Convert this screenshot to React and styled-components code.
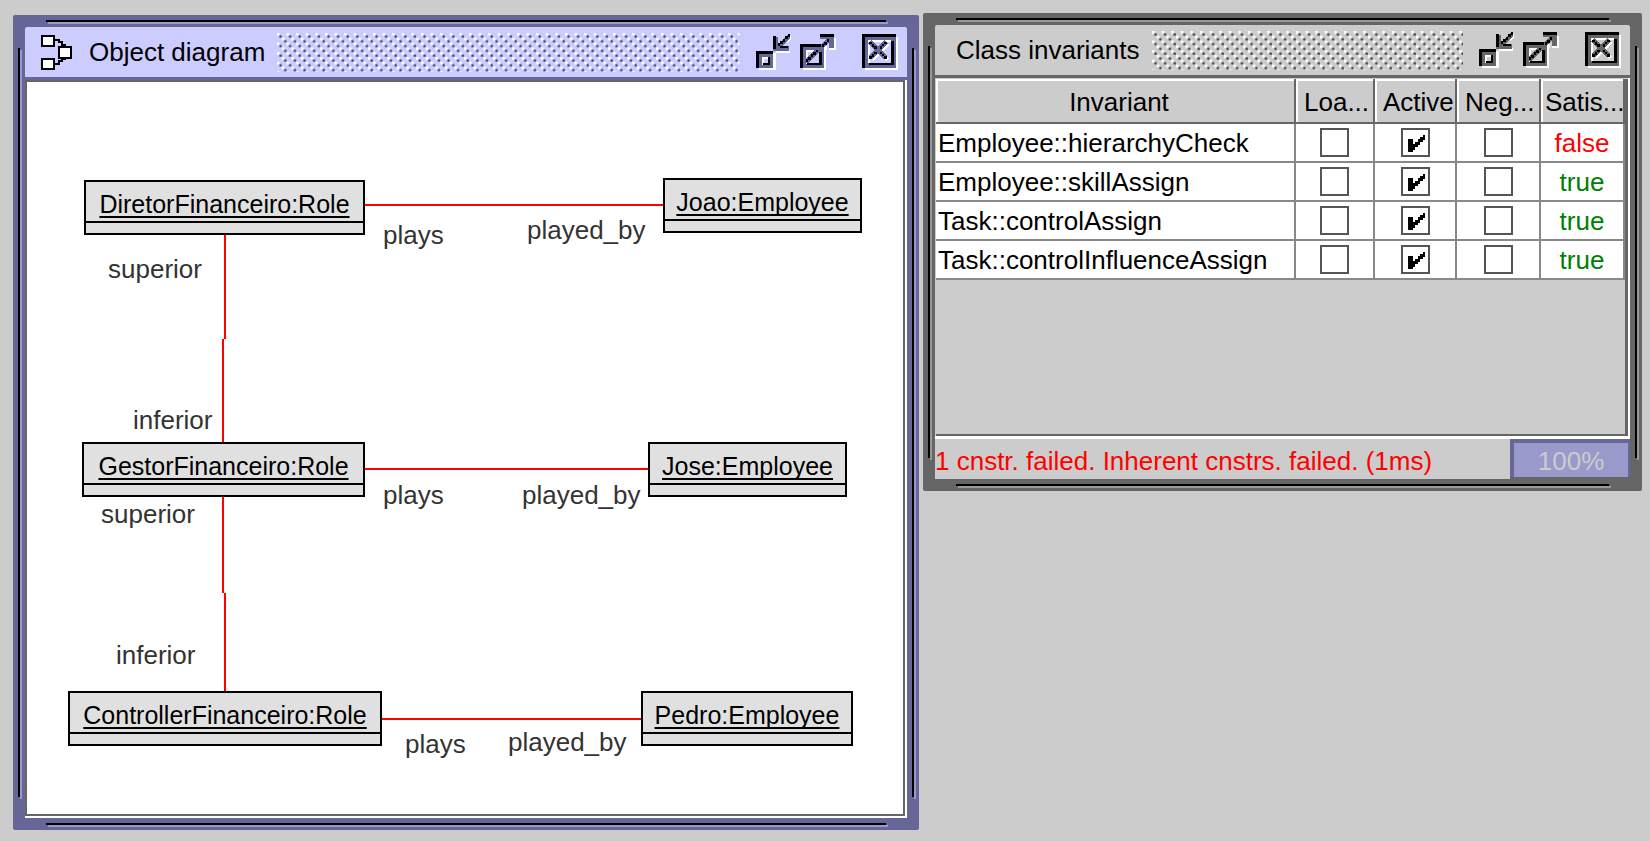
import React, { useId } from "react";
import styled, { createGlobalStyle, css } from "styled-components";

const GlobalStyle = createGlobalStyle`
  * { box-sizing: border-box; }
  body {
    margin: 0;
    background: #cccccc;
    color: #000;
    font-family: "Liberation Sans", Arial, sans-serif;
    font-size: 26px;
    line-height: 30px;
  }
`;

const active = { frame: "#666699", groove: "#9999cc", title: "#ccccff", dot: "#333366" };
const idle = { frame: "#666666", groove: "#999999", title: "#cccccc", dot: "#333333" };

const Desktop = styled.main`
  display: flex;
  gap: 4px;
  min-height: 100vh;
  padding: 13px 8px 11px 13px;
`;

const Frame = styled.section`
  position: relative;
  display: flex;
  flex-direction: column;
  flex: ${(p) => p.$grow} 1 ${(p) => p.$grow}px;
  min-width: 0;
  padding: 12px;
  border-radius: 2px;
  background: ${(p) => p.$tone.frame};
  ${(p) => (p.$compact ? css`align-self: flex-start;` : css`margin-top: 2px;`)}
`;

const Groove = styled.span`
  position: absolute;
  background: #000;
  box-shadow: 2px 2px 0 ${(p) => p.$tone.groove};
  ${(p) =>
    p.$side === "top" || p.$side === "bottom"
      ? css`left: 33px; right: 33px; height: 2px;`
      : css`top: 33px; bottom: 33px; width: 2px;`}
  ${(p) => p.$side}: 5px;
`;

const TitleBar = styled.header`
  display: flex;
  align-items: center;
  height: 53px;
  padding: 0 9px 0 ${(p) => (p.$icon ? 15 : 21)}px;
  background: ${(p) => p.$tone.title};
  border-bottom: 3px solid ${(p) => p.$tone.frame};
  border-radius: 2px 2px 0 0;
`;

const Title = styled.h1`
  margin: 0 12px 0 0;
  font-size: 26px;
  font-weight: 400;
  line-height: 30px;
  white-space: nowrap;
`;

const DiagramIcon = styled.svg`
  flex: none;
  width: 32px;
  height: 38px;
  margin-right: 17px;
`;

const BumpStrip = styled.svg`
  flex: 1;
  min-width: 0;
  height: 39px;
  margin-right: 16px;
`;

const WindowButton = styled.button`
  flex: none;
  width: 36px;
  height: 36px;
  margin: 0 0 0 ${(p) => p.$gap || 0}px;
  padding: 0;
  border: 0;
  background: none;

  svg { display: block; }
`;

const Sunken = styled.div`
  flex: 1;
  display: flex;
  border: solid #fff;
  border-width: 0 2px 2px 0;
`;

const Canvas = styled.div`
  position: relative;
  flex: 1;
  min-height: 640px;
  overflow: hidden;
  background: #fff;
  border: 2px solid #666;
`;

const Edges = styled.svg`
  position: absolute;
  inset: 0;
  width: 100%;
  height: 100%;
`;

const Node = styled.article`
  position: absolute;
  left: ${(p) => p.$x}px;
  top: ${(p) => p.$y}px;
  width: ${(p) => p.$w}px;
  height: 55px;
  border: 2px solid #000;
  background: #e0e0e0;
`;

const NodeName = styled.div`
  height: 41px;
  padding-top: 7px;
  border-bottom: 2px solid #000;
  font-size: 25px;
  text-align: center;
  text-decoration: underline;
  text-decoration-thickness: 2px;
  text-underline-offset: 3px;
  text-decoration-skip-ink: none;
  white-space: nowrap;
`;

const RoleLabel = styled.span`
  position: absolute;
  left: ${(p) => p.$x}px;
  top: ${(p) => p.$y}px;
  color: #333;
`;

const ScrollPane = styled.div`
  height: 361px;
  padding: 1px 0 0 1px;
  background: #ccc;
  border: solid #fff;
  border-width: 0 2px 3px 0;
  overflow: hidden;
`;

const Viewport = styled.div`
  height: 100%;
  border: solid #666;
  border-width: 0 3px 2px 0;
`;

const Grid = styled.table`
  width: 100%;
  table-layout: fixed;
  border-collapse: separate;
  border-spacing: 0;
`;

const Column = styled.col`
  width: ${(p) => p.$w};
`;

const Heading = styled.th`
  height: 45px;
  padding: 3px 0 0 ${(p) => p.$inset || 8}px;
  background: #ccc;
  border-right: 2px solid #666;
  border-bottom: 2px solid #666;
  box-shadow: inset 2px 2px 0 #fff;
  font-weight: 400;
  text-align: ${(p) => (p.$inset ? "left" : "center")};
  white-space: nowrap;
  overflow: hidden;
`;

const Cell = styled.td`
  height: 39px;
  padding: ${(p) => (p.$center ? "0" : "0 0 0 2px")};
  background: #fff;
  border-right: 2px solid #888;
  border-bottom: 2px solid #888;
  text-align: ${(p) => (p.$center ? "center" : "left")};
  color: ${(p) => p.$color || "#000"};
  white-space: nowrap;
  overflow: hidden;
`;

const CheckWrap = styled.label`
  position: relative;
  display: block;
  width: 29px;
  height: 29px;
  margin: 0 auto;

  input {
    display: block;
    appearance: none;
    width: 29px;
    height: 29px;
    margin: 0;
    background: #fff;
    border: 2px solid #555;
  }
  svg {
    position: absolute;
    inset: 0;
    pointer-events: none;
  }
`;

const StatusBar = styled.footer`
  display: flex;
  height: 40px;
`;

const StatusText = styled.output`
  flex: 1;
  min-width: 0;
  padding-top: 7px;
  background: #ccc;
  color: #f00;
  white-space: nowrap;
  overflow: hidden;
`;

const Progress = styled.div`
  width: 120px;
  margin-bottom: 2px;
  border: solid #666699;
  border-width: 4px 2px 0 4px;
  background: #9999cc;
  color: #ccc;
  line-height: 36px;
  text-align: center;
`;

function Bumps({ tone }) {
  const id = useId();
  return (
    <BumpStrip aria-hidden="true">
      <defs>
        <pattern id={id} width="9.6" height="9.6" patternUnits="userSpaceOnUse">
          <path fill="#fff" d="M0 0h2.6v2.6H0zM4.8 4.8h2.6v2.6H4.8z" />
          <path fill={tone.dot} d="M2.4 2.4h2.2v2.2H2.4zM7.2 7.2h2.2v2.2H7.2z" />
        </pattern>
      </defs>
      <rect width="100%" height="100%" fill={`url(#${id})`} />
    </BumpStrip>
  );
}

function MinimizeIcon({ tone }) {
  return (
    <svg width="36" height="36" shapeRendering="crispEdges">
      <path fill="#fff" d="M3 19h17v17H3zM20 16h14v3H20zM31 5l4-3v3l-4 4z" />
      <path fill={tone.frame} d="M0 17h17v17H0z" />
      <path fill="#000" d="M0 17h17v3H0zM0 17h3v17H0z" />
      <path fill="#fff" d="M6 23h8v8H6z" />
      <path fill={tone.title} d="M8 25h4v4H8z" />
      <path fill="#000" d="M12 23h2v8H7v-2h5z" />
      <path fill={tone.frame} d="M17 3h5v7L31 1h3v4l-8 7h7v5H17z" />
      <path fill="#000" d="M17 2h3v13h-3zM22 9h2V7h3V5h2V2h3V0h2v3h-2v2h-3v3h-2v2h-3v2h-2zM24 12h8v2h-8z" />
    </svg>
  );
}

function MaximizeIcon({ tone }) {
  return (
    <svg width="36" height="36" shapeRendering="crispEdges">
      <path fill="#fff" d="M3 12h23v24H3zM29 4h7v12h-7zM22 12h5v4h-5z" />
      <path fill={tone.frame} d="M0 10h24v24H0z" />
      <path fill="#000" d="M0 10h21v3H0zM0 10h3v24H0z" />
      <path fill="#fff" d="M6 16h14v14H6z" />
      <path fill={tone.title} d="M8 18h12v11H8z" />
      <path fill="#000" d="M19 18h3v13H7v-2h12z" />
      <path fill={tone.frame} d="M5 25l12-11 3 3L9 29H5z" />
      <path fill="#000" d="M6 25h2v-2h3v-3h2v-2h3v-2h2v2h-2v3h-3v2h-2v3H8v2H6z" />
      <path fill={tone.frame} d="M20 0h14v14h-5V8l-6 6-3-3 6-6h-6z" />
      <path fill="#000" d="M20 0h14v3H20zM22 10h2V8h3V5h2v3h-2v3h-3v2h-2z" />
    </svg>
  );
}

function CloseIcon({ tone }) {
  return (
    <svg width="36" height="36" shapeRendering="crispEdges">
      <path fill="#fff" d="M3 3h33v33H3z" />
      <path fill={tone.frame} d="M0 0h34v34H0z" />
      <path fill="#000" d="M0 0h34v3H0zM0 0h3v34H0zM29 7h3v24H7v-2h22z" />
      <path fill="#fff" d="M6 6h23v23H6z" />
      <path fill={tone.title} d="M8 8h21v21H8z" />
      <path stroke="#fff" strokeWidth="4" d="M10 10l16 16M26 10L10 26" />
      <path stroke={tone.frame} strokeWidth="5" d="M8 8l16 16M24 8L8 24" />
      <path fill="#000" d="M7 8h3v2h2v2h3v3h-3v-2h-2v-3H7zM22 8h3v2h-3v2h-2v3h-2v-3h2v-2h2zM12 18h3v2h-3v3h-2v2H7v-3h3v-2h2zM18 18h2v2h2v2h3v3h-3v-3h-2v-2h-2z" />
    </svg>
  );
}

function WindowFrame({ title, tone, grow, compact, icon, children }) {
  return (
    <Frame $tone={tone} $grow={grow} $compact={compact} aria-label={title}>
      {["top", "right", "bottom", "left"].map((side) => (
        <Groove key={side} $side={side} $tone={tone} />
      ))}
      <TitleBar $tone={tone} $icon={Boolean(icon)}>
        {icon}
        <Title>{title}</Title>
        <Bumps tone={tone} />
        <WindowButton aria-label="Minimize"><MinimizeIcon tone={tone} /></WindowButton>
        <WindowButton $gap={8} aria-label="Maximize"><MaximizeIcon tone={tone} /></WindowButton>
        <WindowButton $gap={26} aria-label="Close"><CloseIcon tone={tone} /></WindowButton>
      </TitleBar>
      {children}
    </Frame>
  );
}

const nodes = [
  { name: "DiretorFinanceiro:Role", x: 57, y: 98, w: 281 },
  { name: "Joao:Employee", x: 636, y: 96, w: 199 },
  { name: "GestorFinanceiro:Role", x: 55, y: 360, w: 283 },
  { name: "Jose:Employee", x: 621, y: 360, w: 199 },
  { name: "ControllerFinanceiro:Role", x: 41, y: 609, w: 314 },
  { name: "Pedro:Employee", x: 614, y: 609, w: 212 },
];

const labels = [
  { text: "plays", x: 356, y: 138 },
  { text: "played_by", x: 500, y: 133 },
  { text: "superior", x: 81, y: 172 },
  { text: "inferior", x: 106, y: 323 },
  { text: "plays", x: 356, y: 398 },
  { text: "played_by", x: 495, y: 398 },
  { text: "superior", x: 74, y: 417 },
  { text: "inferior", x: 89, y: 558 },
  { text: "plays", x: 378, y: 647 },
  { text: "played_by", x: 481, y: 645 },
];

const invariants = [
  { name: "Employee::hierarchyCheck", satisfied: false },
  { name: "Employee::skillAssign", satisfied: true },
  { name: "Task::controlAssign", satisfied: true },
  { name: "Task::controlInfluenceAssign", satisfied: true },
];

function CheckBox({ label, checked }) {
  return (
    <CheckWrap>
      <input type="checkbox" defaultChecked={checked} aria-label={label} />
      {checked && (
        <svg width="29" height="29" shapeRendering="crispEdges" aria-hidden="true">
          <path d="M7 11h5v5h2v-2h3v-3h2V9h3V7h2v5h-2v2h-3v3h-2v2h-3v3h-2v2H7z" />
        </svg>
      )}
    </CheckWrap>
  );
}

export default function App() {
  return (
    <>
      <GlobalStyle />
      <Desktop>
        <WindowFrame
          title="Object diagram"
          tone={active}
          grow={906}
          icon={
            <DiagramIcon viewBox="0 0 32 38" shapeRendering="crispEdges" aria-hidden="true">
              <path fill="none" stroke="#000" strokeWidth="2" d="M14 7h5v2h3v3h3v3M14 31h5v-3h3v-2h3v-3" />
              <path fill="#fff" stroke="#000" strokeWidth="2" d="M2 3h12v10H2zM19 14h12v11H19zM2 26h12v10H2z" />
            </DiagramIcon>
          }
        >
          <Sunken>
            <Canvas>
              <Edges fill="none" stroke="#ff0000" strokeWidth="2" shapeRendering="crispEdges" aria-hidden="true">
                <path d="M338 123H636M338 387H621M355 637H614" />
                <path d="M198 153V257M196 257V360M196 415V511M198 511V610" />
              </Edges>
              {nodes.map((n) => (
                <Node key={n.name} $x={n.x} $y={n.y} $w={n.w}>
                  <NodeName>{n.name}</NodeName>
                </Node>
              ))}
              {labels.map((l) => (
                <RoleLabel key={`${l.x}-${l.y}`} $x={l.x} $y={l.y}>{l.text}</RoleLabel>
              ))}
            </Canvas>
          </Sunken>
        </WindowFrame>

        <WindowFrame title="Class invariants" tone={idle} grow={719} compact>
          <ScrollPane>
            <Viewport>
              <Grid>
                <colgroup>
                  <Column />
                  <Column $w="79px" />
                  <Column $w="82px" />
                  <Column $w="84px" />
                  <Column $w="84px" />
                </colgroup>
                <thead>
                  <tr>
                    <Heading>Invariant</Heading>
                    <Heading $inset={8}>Loa...</Heading>
                    <Heading $inset={8}>Active</Heading>
                    <Heading $inset={8}>Neg...</Heading>
                    <Heading $inset={4}>Satis...</Heading>
                  </tr>
                </thead>
                <tbody>
                  {invariants.map((row) => (
                    <tr key={row.name}>
                      <Cell>{row.name}</Cell>
                      <Cell $center><CheckBox label={`${row.name} loaded`} /></Cell>
                      <Cell $center><CheckBox label={`${row.name} active`} checked /></Cell>
                      <Cell $center><CheckBox label={`${row.name} negated`} /></Cell>
                      <Cell $center $color={row.satisfied ? "#008000" : "#ff0000"}>
                        {String(row.satisfied)}
                      </Cell>
                    </tr>
                  ))}
                </tbody>
              </Grid>
            </Viewport>
          </ScrollPane>
          <StatusBar>
            <StatusText>1 cnstr. failed. Inherent cnstrs. failed. (1ms)</StatusText>
            <Progress role="progressbar" aria-label="Evaluation" aria-valuenow={100} aria-valuemin={0} aria-valuemax={100}>
              100%
            </Progress>
          </StatusBar>
        </WindowFrame>
      </Desktop>
    </>
  );
}
